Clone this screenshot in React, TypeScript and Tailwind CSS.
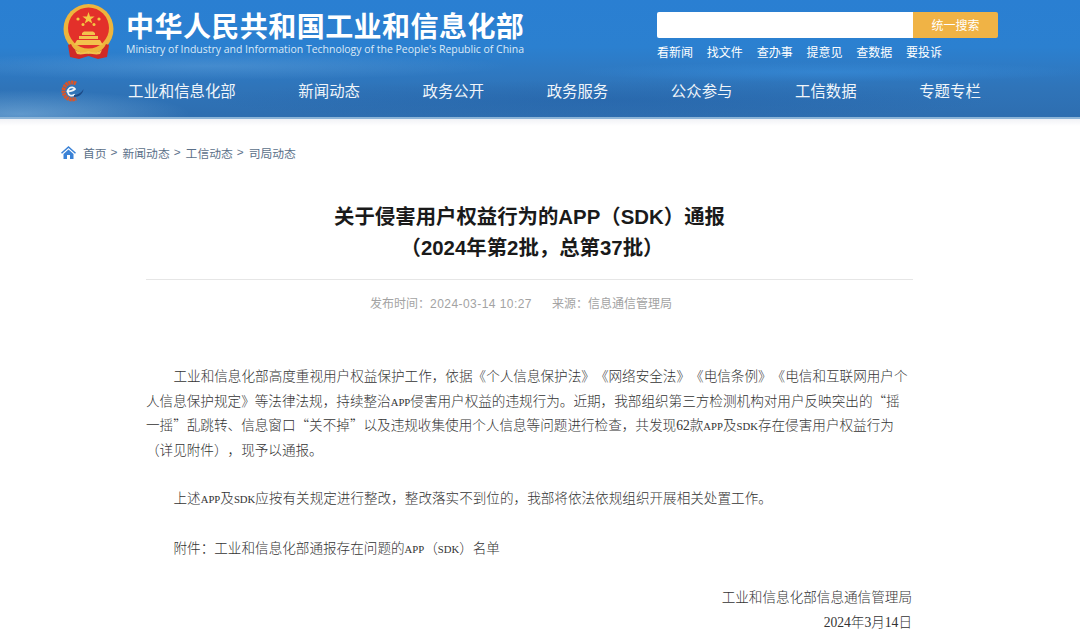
import type { ReactNode } from "react";

const NAV = ["工业和信息化部", "新闻动态", "政务公开", "政务服务", "公众参与", "工信数据", "专题专栏"];
const QUICK = ["看新闻", "找文件", "查办事", "提意见", "查数据", "要投诉"];
const CRUMBS = ["新闻动态", "工信动态", "司局动态"];

function Emblem() {
	return (
		<svg width="53" height="56" viewBox="0 0 53 56" className="shrink-0">
			<circle cx="26.5" cy="25" r="25" fill="#eeb53c" />
			<circle cx="26.5" cy="24" r="20.5" fill="#e3302a" />
			<polygon points="26.5,8 28,12.4 32.6,12.4 28.9,15.2 30.3,19.6 26.5,16.9 22.7,19.6 24.1,15.2 20.4,12.4 25,12.4" fill="#f5c842" />
			<circle cx="16" cy="15" r="1.6" fill="#f5c842" />
			<circle cx="37" cy="15" r="1.6" fill="#f5c842" />
			<circle cx="21" cy="20.5" r="1.5" fill="#f5c842" />
			<circle cx="32" cy="20.5" r="1.5" fill="#f5c842" />
			<path d="M20 31h13v-2l-2-1.500h-9l-2 1.500zM17 35h19v-3H17zM12 41h29l-3-5H15z" fill="#f3c24d" />
			<path d="M9 40c3 7 10 10 17.500 10S41 47 44 40l3 1-2 12-9 2-9.500-3-9.500 3-9-2-2-12z" fill="#cf2a26" />
			<path d="M13 46c5 3 9 3 13.500 1 4.500 2 8.500 2 13.500-1l-2 4c-4 1-8 0-11.500-1-3.500 1-7.500 2-11.500 1z" fill="#f3c24d" />
		</svg>
	);
}

function SmallLogo() {
	return (
		<svg width="24" height="22" viewBox="0 0 24 22" className="shrink-0">
			<path d="M16 3.500A8.500 8.500 0 1 0 16 18.500" fill="none" stroke="#dd5426" strokeWidth="4" strokeDasharray="2.200 0.600" />
			<path d="M6.500 11.500c3 0 6.500-.8 8.500-2.500-1-1.800-3.800-2.300-5.600-.8-2.600 2-2 6.300 1 7.300 1.500.5 3 0 4.400-1" fill="none" stroke="#eef3f8" strokeWidth="1.700" />
			<path d="M14 15c4 0 7.500-2.500 9.500-6-.5 4.500-4 8-9.500 8z" fill="#1c4a86" />
		</svg>
	);
}

function HomeIcon() {
	return (
		<svg width="15" height="13" viewBox="0 0 15 13" className="shrink-0">
			<path d="M7.500 0 0 6.800l1 1L7.500 2l6.500 5.800 1-1zM2.500 8v5h3.500V9h3v4h3.500V8l-5-4.500z" fill="#3b82d6" />
		</svg>
	);
}

// 宋体 style half-width capitals in the body text
function Lat({ children }: { children: ReactNode }) {
	return <span className="font-['Liberation_Serif',serif] text-[10.700px] leading-none font-normal">{children}</span>;
}

// half-width digits
function Num({ children }: { children: ReactNode }) {
	return <span className="font-['Liberation_Serif',serif] leading-none font-normal">{children}</span>;
}

export default function App() {
	return (
		<div className="h-[633px] w-[1080px] overflow-hidden bg-white font-['Noto_Sans_CJK_SC',sans-serif] [text-spacing-trim:space-all]">
			<header className="relative h-[119px] overflow-hidden border-b-2 border-[#8db5d8] bg-[linear-gradient(180deg,#2a7fd2_0%,#2b80d0_40%,#2e7ac4_58%,#2f74b9_75%,#2e6eb0_100%)]">
				<div className="absolute inset-0 bg-[radial-gradient(ellipse_300px_14px_at_210px_66px,rgba(150,200,240,0.22),transparent),radial-gradient(ellipse_260px_10px_at_830px_72px,rgba(60,150,230,0.4),transparent),radial-gradient(ellipse_170px_24px_at_20px_114px,rgba(170,215,245,0.4),transparent),radial-gradient(ellipse_400px_20px_at_600px_100px,rgba(25,80,150,0.25),transparent)]" />
				<div className="relative flex h-[71px] justify-between pl-[62px] pr-[82px] pt-[4px]">
					<div className="flex gap-[11px]">
						<Emblem />
						<div className="w-[400px] pt-[4px] text-white">
							<div className="text-[28px] font-bold leading-[34px] tracking-[0.45px] whitespace-nowrap">中华人民共和国工业和信息化部</div>
							<div className="font-['Open_Sans',sans-serif] text-[10.480px] leading-[15px] whitespace-nowrap text-[#dbe9f6]">
								Ministry of Industry and Information Technology of the People's Republic of China
							</div>
						</div>
					</div>
					<div className="w-[341px] pt-[8px]">
						<div className="flex h-[26px] overflow-hidden rounded-[2px]">
							<div className="flex-1 bg-white" />
							<div className="flex w-[85px] items-center justify-center bg-[#f0b345] text-[12px] text-white">统一搜索</div>
						</div>
						<div className="mt-[5px] flex gap-[13.800px] text-[12px] leading-[18px] text-white">
							{QUICK.map((item) => (
								<span key={item}>{item}</span>
							))}
						</div>
					</div>
				</div>
				<nav className="relative flex h-[40px] items-center pl-[60px]">
					<div className="w-[68px]">
						<SmallLogo />
					</div>
					<div className="flex gap-[62.600px] text-[15.400px] text-[#f0f5fa]">
						{NAV.map((item) => (
							<span key={item} className="whitespace-nowrap">{item}</span>
						))}
					</div>
				</nav>
			</header>
			<div className="h-[7px] bg-[linear-gradient(180deg,#f1f2f6,#ffffff)]" />
			<div className="mt-[17px] flex h-[19px] items-center gap-[4px] pl-[61px] text-[11.800px] text-[#5b7089]">
				<HomeIcon />
				<span className="ml-[3px]">首页</span>
				{CRUMBS.map((item) => (
					<span key={item} className="flex items-center gap-[5px]">
						<span className="font-['Liberation_Sans',sans-serif]">&gt;</span>
						{item}
					</span>
				))}
			</div>
			<main className="ml-[146px] mt-[40px] w-[767px]">
				<h1 className="text-center font-['Liberation_Sans','Noto_Sans_CJK_SC',sans-serif] text-[20.400px] font-bold leading-[31px] text-[#1a1a1a]">
					关于侵害用户权益行为的APP（SDK）通报
					<br />
					<span className="inline-block pl-[5px]">（2024年第2批，总第37批）</span>
				</h1>
				<div className="mt-[15px] border-t border-[#e6e6e6] pr-[17px] pt-[15px] text-center font-['Liberation_Sans','Noto_Sans_CJK_SC',sans-serif] text-[12px] leading-[18px] text-[#a3a3a3]">
					<span>发布时间：<span className="tracking-[0.45px]">2024-03-14 10:27</span></span>
					<span className="ml-[20px]">来源：信息通信管理局</span>
				</div>
				<article className="mt-[50px] text-[13.600px] leading-[24.600px] font-light text-[#333333]">
					<p className="whitespace-nowrap indent-[27.500px]">
						工业和信息化部高度重视用户权益保护工作，依据《个人信息保护法》《网络安全法》《电信条例》《电信和互联网用户个
						<br />
						人信息保护规定》等法律法规，持续整治<Lat>APP</Lat>侵害用户权益的违规行为。近期，我部组织第三方检测机构对用户反映突出的“摇
						<br />
						一摇”乱跳转、信息窗口“关不掉”以及违规收集使用个人信息等问题进行检查，共发现<Num>62</Num>款<Lat>APP</Lat>及<Lat>SDK</Lat>存在侵害用户权益行为
						<br />
						（详见附件），现予以通报。
					</p>
					<p className="mt-[24px] indent-[27.500px]">上述<Lat>APP</Lat>及<Lat>SDK</Lat>应按有关规定进行整改，整改落实不到位的，我部将依法依规组织开展相关处置工作。</p>
					<p className="mt-[25px] indent-[27.500px]">附件：工业和信息化部通报存在问题的<Lat>APP</Lat>（<Lat>SDK</Lat>）名单</p>
					<p className="mt-[24px] pr-px text-right">工业和信息化部信息通信管理局</p>
					<p className="pr-px pt-px text-right"><Num>2024</Num>年<Num>3</Num>月<Num>14</Num>日</p>
				</article>
			</main>
		</div>
	);
}
